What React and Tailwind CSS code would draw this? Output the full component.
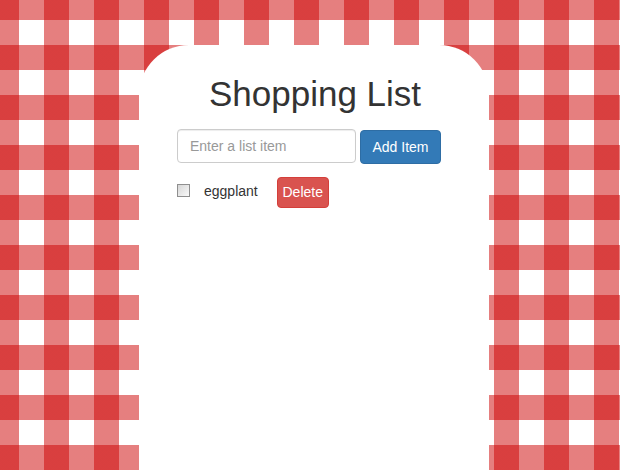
import { useState } from 'react';

const App = () => {
  const [items] = useState(['eggplant']);

  return (
    <div className="h-[470px] w-[620px] overflow-hidden bg-white bg-[image:linear-gradient(90deg,rgba(204,0,0,0.5)_50%,transparent_50%),linear-gradient(180deg,rgba(204,0,0,0.5)_50%,transparent_50%)] bg-[length:50px_50px] bg-[position:-6px_-5px] font-['Liberation_Sans',Arial,sans-serif]">
      <div className="mt-[45px] ml-[139px] w-[350px] min-h-[425px] rounded-t-[50px] bg-white pt-[29px]">
        <h1 className="pl-[2px] text-center text-[35px] leading-[40px] font-normal text-[#333]">Shopping List</h1>

        <div className="mt-[15px] ml-[38px] flex items-start">
          <input
            type="text"
            placeholder="Enter a list item"
            className="h-[34px] w-[179px] rounded-[4px] border border-[#ccc] px-[12px] text-[14px] text-[#555] placeholder:text-[#999] shadow-[inset_0_1px_1px_rgba(0,0,0,0.075)] outline-none"
          />
          <button
            type="button"
            className="ml-[4px] mt-[1px] flex h-[34px] w-[81px] items-center justify-center rounded-[4px] border border-[#2e6da4] bg-[#337ab7] text-[14px] text-white"
          >
            Add Item
          </button>
        </div>

        {items.map((item) => (
          <div key={item} className="mt-[13px] ml-[38px] flex items-start">
            <div className="mt-[7px] h-[13px] w-[13px] border border-[#8f8f8f] bg-gradient-to-br from-[#d6d6d6] to-[#fafafa]" />
            <span className="mt-[4px] ml-[14px] text-[14px] leading-[20px] text-[#333]">{item}</span>
            <button
              type="button"
              className="ml-[19px] flex h-[31px] w-[52px] items-center justify-center rounded-[4px] border border-[#d43f3a] bg-[#d9534f] text-[14px] text-white"
            >
              Delete
            </button>
          </div>
        ))}
      </div>
    </div>
  );
};

export default App;
